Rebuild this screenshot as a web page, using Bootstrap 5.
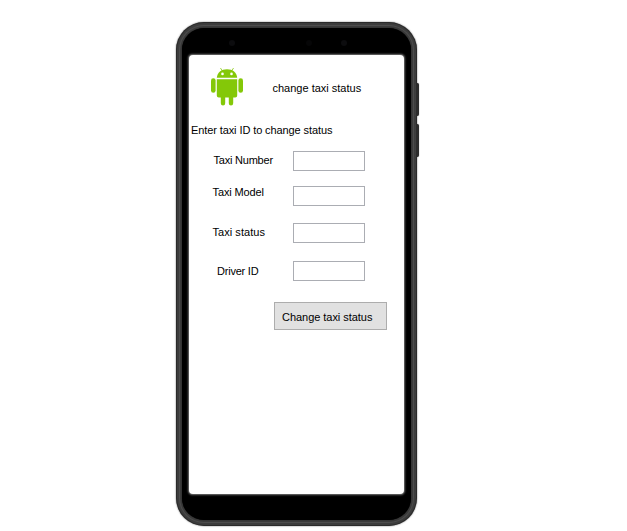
<!DOCTYPE html>
<html lang="en">
<head>
<meta charset="utf-8">
<meta name="viewport" content="width=device-width, initial-scale=1">
<title>Change taxi status</title>
<link href="https://cdn.jsdelivr.net/npm/bootstrap@5.3.0/dist/css/bootstrap.min.css" rel="stylesheet">
<style>
body{font:11px/14px "Liberation Sans",Arial,sans-serif;color:#000;background:#fff;height:531px;overflow:hidden;padding:22px 0 0 176px}
.phone{width:241px;height:504px;border-radius:28px;padding:1px;background:#2a2a2a;box-shadow:0 0 1.5px #444}
.rim{border-radius:27px;padding:2px;background:#3c3c3c}
.rim-in{border-radius:25px;padding:1px;background:#4c4c4c}
.rim-line{border-radius:24px;padding:2px;background:#3a3a3a}
.bezel{border-radius:22px;background:#000;padding:27px 7px 26px;box-shadow:0 0 1px #000}
.screen{background:#fff;border-radius:4px;box-shadow:0 0 2px .5px #777}
.side-key{right:-2px;width:3px;height:33px;background:#2c2c2c;border-radius:0 2px 2px 0;box-shadow:0 0 1px #555}
.key-up{top:61px}.key-down{top:102px}
.lens{width:6px;height:6px;border-radius:50%;background:#0c0c0e;top:18px;filter:blur(.7px)}
.lens-a{left:53px}.lens-b{left:165px}.lens-c{left:130px;opacity:.5}
.top-row{height:68px;padding:13px 0 0 22px}
.top-title{margin:13px 0 0 29.500px}
.intro{padding-left:2px;height:28px;letter-spacing:-.1px}
.field-row{height:20px}
.field-row label{width:104px;white-space:nowrap}
.field-row .form-control{width:72px;height:20px;min-height:0;border:1px solid #abadb3;border-radius:0;padding:0 3px;font-size:11px;background:#fff}
.l-number{padding:2px 0 0 24.500px;letter-spacing:-.22px}.l-model{padding:0 0 0 23.500px;margin-top:-1px;letter-spacing:-.12px}.l-status{padding:2px 0 0 23.500px;letter-spacing:.05px}.l-driver{padding:3px 0 0 28px;letter-spacing:-.22px}
.g-1{margin-bottom:15px}.g-2{margin-bottom:17px}.g-3{margin-bottom:18px}.g-4{margin-bottom:21px}
.btn-change{margin-left:85px;width:113px;height:28px;border:1px solid #adadad;border-radius:0;background:#e1e1e1;color:#000;font-size:11px;line-height:14px;padding:2px 0 0 7px;text-align:left;letter-spacing:-.04px}
</style>
</head>
<body>
<main class="phone position-relative">
  <div class="rim h-100"><div class="rim-in h-100"><div class="rim-line h-100"><div class="bezel h-100">
    <form class="screen h-100">
      <header class="top-row d-flex align-items-start">
        <svg width="32" height="38" viewBox="0 0 32 38" fill="#84c808" aria-hidden="true">
          <path d="M5.800 9.700C6.200 4.800 10.300 1.300 16 1.300s9.800 3.500 10.200 8.400z"/>
          <path d="M9.700.4l2.100 3.200M22.300.4l-2.100 3.200" stroke="#84c808" stroke-width=".8" stroke-linecap="round"/>
          <circle cx="11.500" cy="5.900" r="1.300" fill="#fff"/><circle cx="20.500" cy="5.900" r="1.300" fill="#fff"/>
          <path d="M5.800 11.200h20.400v16.300a2 2 0 0 1-2 2h-2v5.700a2.200 2.200 0 0 1-4.400 0v-5.700h-3.600v5.700a2.200 2.200 0 0 1-4.400 0v-5.700h-2a2 2 0 0 1-2-2z"/>
          <rect y="10.200" width="4.600" height="14.500" rx="2.300"/><rect x="27.400" y="10.200" width="4.600" height="14.500" rx="2.300"/>
        </svg>
        <span class="top-title">change taxi status</span>
      </header>
      <div class="intro">Enter taxi ID to change status</div>
      <div class="field-row d-flex align-items-start g-1"><label class="l-number" for="num">Taxi Number</label><input class="form-control" id="num" type="text"></div>
      <div class="field-row d-flex align-items-start g-2"><label class="l-model" for="model">Taxi Model</label><input class="form-control" id="model" type="text"></div>
      <div class="field-row d-flex align-items-start g-3"><label class="l-status" for="status">Taxi status</label><input class="form-control" id="status" type="text"></div>
      <div class="field-row d-flex align-items-start g-4"><label class="l-driver" for="driver">Driver ID</label><input class="form-control" id="driver" type="text"></div>
      <button type="button" class="btn btn-change">Change taxi status</button>
    </form>
  </div></div></div></div>
  <i class="lens lens-a position-absolute"></i><i class="lens lens-b position-absolute"></i><i class="lens lens-c position-absolute"></i>
  <i class="side-key key-up position-absolute"></i><i class="side-key key-down position-absolute"></i>
</main>
<script src="https://cdn.jsdelivr.net/npm/bootstrap@5.3.0/dist/js/bootstrap.bundle.min.js"></script>
</body>
</html>
